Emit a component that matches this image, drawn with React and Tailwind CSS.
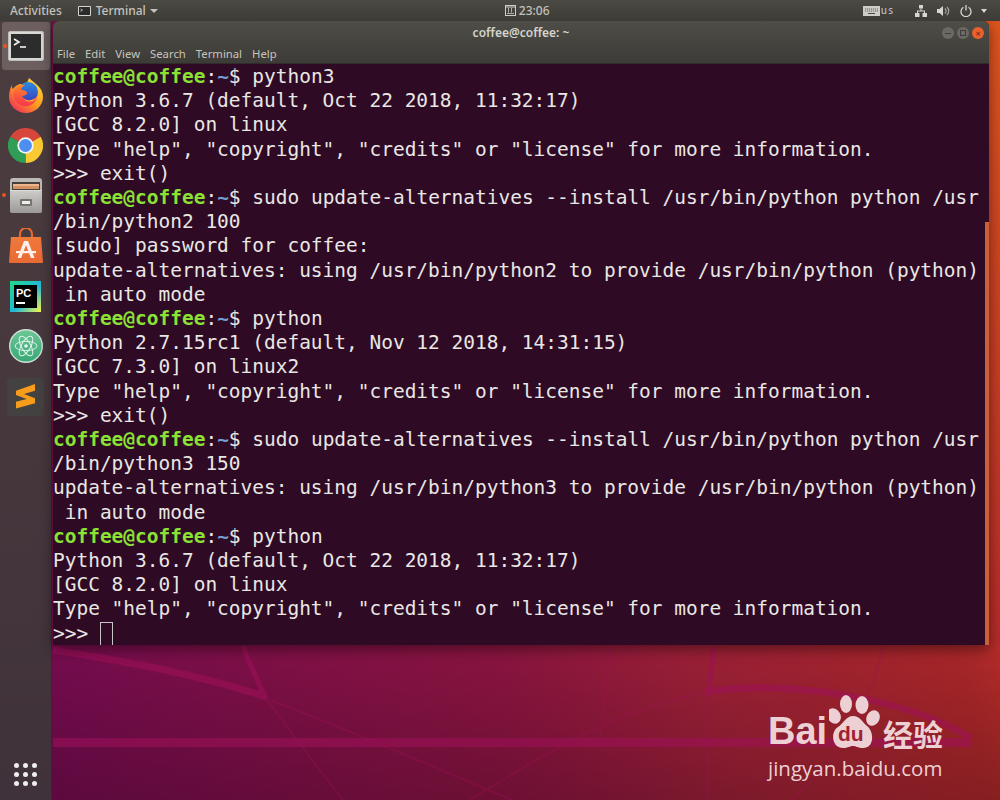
import React from "react";

const P = ({ children }) => (
  <div>
    <span className="font-bold text-[#8ae234]">coffee@coffee</span>
    <span>:</span>
    <span className="font-bold text-[#729fcf]">~</span>
    <span>$ {children}</span>
  </div>
);

const L = ({ children }) => <div>{children}</div>;

const TerminalIcon = () => (
  <svg width="36" height="30" viewBox="0 0 36 30">
    <rect x="0.5" y="0.5" width="35" height="29" rx="1.5" fill="#d8d8d4" stroke="#bdbdb8" />
    <rect x="3" y="3" width="30" height="24" fill="#2c2c2c" />
    <path d="M6 8l5 3-5 3" fill="none" stroke="#f2f2f2" strokeWidth="1.6" />
    <path d="M12 16h6" stroke="#f2f2f2" strokeWidth="1.6" />
  </svg>
);

const FirefoxIcon = () => (
  <svg width="36" height="36" viewBox="0 0 36 36">
    <defs>
      <linearGradient id="ffa" x1="0.85" y1="0.1" x2="0.15" y2="0.95">
        <stop offset="0" stopColor="#ffd83a" />
        <stop offset="0.5" stopColor="#ff9a1f" />
        <stop offset="1" stopColor="#f0305a" />
      </linearGradient>
      <linearGradient id="ffb" x1="0.5" y1="0" x2="0.5" y2="1">
        <stop offset="0" stopColor="#2a8ae0" />
        <stop offset="1" stopColor="#3a3fb8" />
      </linearGradient>
      <linearGradient id="ffc" x1="0.5" y1="0" x2="0.3" y2="1">
        <stop offset="0" stopColor="#ff8a25" />
        <stop offset="1" stopColor="#f5334f" />
      </linearGradient>
    </defs>
    <path d="M21 1c3 3 8 6 11 10 2 3 3 6 3 9 0 9-8 16-17 16S1 29 1 20c0-5 1-8 3-12 0 2 0 3 1 4 2-3 5-5 9-5 3 0 5 0 7-6z" fill="url(#ffa)" />
    <circle cx="20" cy="15" r="10" fill="url(#ffb)" />
    <path d="M6 14c2-5 6-7 11-6-2 1-4 3-4 5 3 0 6 1 6 3s-3 3-5 3c2 3 5 5 9 4 3-1 5-2 6-4 0 6-6 11-13 10C9 28 4 21 6 14z" fill="url(#ffc)" />
    <path d="M16 22c3 2 8 2 12-1-2 4-8 5-12 1z" fill="#ffb43a" />
  </svg>
);

const ChromeIcon = () => (
  <svg width="35" height="35" viewBox="0 0 36 36">
    <path d="M18 18L2.4 9A18 18 0 0 1 33.6 9z" fill="#d8453a" />
    <path d="M18 18L33.6 9A18 18 0 0 1 18 36z" fill="#fbc934" />
    <path d="M18 18L18 36A18 18 0 0 1 2.4 9z" fill="#2f9e56" />
    <circle cx="18" cy="18" r="8.4" fill="#f4f4f4" />
    <circle cx="18" cy="18" r="6.6" fill="#4d8ff0" />
  </svg>
);

const FilesIcon = () => (
  <svg width="34" height="36" viewBox="0 0 34 36">
    <defs>
      <linearGradient id="cab" x1="0" y1="0" x2="0" y2="1">
        <stop offset="0" stopColor="#cfcdc9" />
        <stop offset="1" stopColor="#9c9a96" />
      </linearGradient>
    </defs>
    <rect x="1" y="0" width="32" height="35" rx="3" fill="#bcbab6" />
    <rect x="3" y="4" width="28" height="9" fill="#45403a" />
    <rect x="4" y="6" width="26" height="2" fill="#eeb58a" />
    <rect x="4" y="8" width="26" height="3" fill="#d49166" />
    <rect x="1" y="12" width="32" height="23" rx="2.5" fill="url(#cab)" />
    <rect x="1" y="12" width="32" height="1" fill="#dedcd8" />
    <rect x="11" y="21" width="12" height="7" rx="1" fill="#75736f" />
    <rect x="13" y="23" width="8" height="3" fill="#eeedea" />
  </svg>
);

const StoreIcon = () => (
  <svg width="34" height="35" viewBox="0 0 34 35">
    <defs>
      <linearGradient id="bag" x1="0" y1="0" x2="0" y2="1">
        <stop offset="0" stopColor="#f0793c" />
        <stop offset="1" stopColor="#e86a33" />
      </linearGradient>
    </defs>
    <path d="M11 9V6a6 6 0 0 1 12 0v3" fill="none" stroke="#e8692f" strokeWidth="2.2" />
    <path d="M2 9h30l2 25a1 1 0 0 1-1 1H1a1 1 0 0 1-1-1z" fill="url(#bag)" />
    <path d="M15 13h4l6.5 17h-3.6l-4.9-13-4.9 13H8.500z" fill="#fdf0e8" />
    <rect x="7" y="23" width="20" height="2.2" fill="#fdf0e8" />
  </svg>
);

const PyCharmIcon = () => (
  <svg width="31" height="31" viewBox="0 0 31 31">
    <defs>
      <linearGradient id="pca" x1="0" y1="0" x2="1" y2="1">
        <stop offset="0" stopColor="#21d789" />
        <stop offset="0.55" stopColor="#21b8d8" />
        <stop offset="1" stopColor="#fcf84a" />
      </linearGradient>
    </defs>
    <rect width="31" height="31" fill="url(#pca)" />
    <rect x="4" y="4" width="23" height="23" fill="#000" />
    <text x="6" y="16" fill="#fff" fontSize="11" fontWeight="700" fontFamily="Liberation Sans, sans-serif">PC</text>
    <rect x="6" y="21" width="9" height="2" fill="#fff" />
  </svg>
);

const AtomIcon = () => (
  <svg width="34" height="34" viewBox="0 0 34 34">
    <defs>
      <linearGradient id="atm" x1="0" y1="0" x2="0" y2="1">
        <stop offset="0" stopColor="#6cc795" />
        <stop offset="1" stopColor="#37a877" />
      </linearGradient>
    </defs>
    <circle cx="17" cy="17" r="16.3" fill="url(#atm)" stroke="#cfded6" strokeWidth="1.4" />
    <g fill="none" stroke="#e8f4ee" strokeWidth="0.9">
      <ellipse cx="17" cy="17" rx="11" ry="4.6" transform="rotate(60 17 17)" />
      <ellipse cx="17" cy="17" rx="11" ry="4.6" transform="rotate(-60 17 17)" />
      <ellipse cx="17" cy="17" rx="11" ry="4.6" />
    </g>
    <circle cx="17" cy="17" r="1.8" fill="#e8f4ee" />
  </svg>
);

const SublimeIcon = () => (
  <div className="flex h-[38px] w-[37px] items-center justify-center rounded-[4px] bg-[#444240]">
    <svg width="19" height="25" viewBox="0 0 19 25">
      <path d="M0 6.700L19 0v6.700L8 10l11 4.300v5L0 24.500v-6.800L10.700 15 0 11z" fill="#f89c1c" />
    </svg>
  </div>
);

const dockItems = [
  { icon: <FirefoxIcon />, h: "h-[50px]" },
  { icon: <ChromeIcon />, h: "h-[51px]" },
  { icon: <FilesIcon />, h: "h-[49px]", dot: true },
  { icon: <StoreIcon />, h: "h-[51px]" },
  { icon: <PyCharmIcon />, h: "h-[50px]" },
  { icon: <AtomIcon />, h: "h-[50px]" },
  { icon: <SublimeIcon />, h: "h-[51px]" },
];

const Dock = () => (
  <div className="flex w-[52px] shrink-0 flex-col items-center border-r border-[#352a30] bg-gradient-to-b from-[#4c3d3f] to-[#40323a]">
    <div className="relative mt-px flex h-[48px] w-[48px] items-center justify-center rounded-[3px] bg-[#6d5e60]">
      <span className="absolute left-[1px] top-[22px] h-[4px] w-[4px] rounded-full bg-[#e95420]" />
      <TerminalIcon />
    </div>
    {dockItems.map((item, i) => (
      <div key={i} className={`relative flex w-full items-center justify-center ${item.h}`}>
        {item.dot && <span className="absolute left-[2px] top-[22px] h-[4px] w-[4px] rounded-full bg-[#e95420]" />}
        {item.icon}
      </div>
    ))}
    <div className="mb-[14px] mt-auto grid grid-cols-3 gap-[4px]">
      {[...Array(9)].map((_, i) => (
        <span key={i} className="h-[5px] w-[5px] rounded-full bg-[#eeeeee]" />
      ))}
    </div>
  </div>
);

const TopBar = () => (
  <div className="relative z-10 flex h-[21px] items-center bg-gradient-to-b from-[#4b4a44] to-[#3c3b36] pl-[10px] text-[12px] font-medium text-[#c4c2bc]">
    <span>Activities</span>
    <svg className="ml-[16px]" width="13" height="10" viewBox="0 0 13 10">
      <rect width="13" height="10" rx="1" fill="#d5d5d0" />
      <rect x="1" y="1" width="11" height="8" fill="#2c2c2c" />
      <path d="M2.500 3l2 1.200-2 1.200" fill="none" stroke="#eee" strokeWidth="0.7" />
    </svg>
    <span className="ml-[5px]">Terminal</span>
    <span className="ml-[4px] h-0 w-0 border-x-[4px] border-t-[4px] border-x-transparent border-t-[#c4c2bc]" />
    <div className="ml-[347px] flex items-center gap-[3px]">
      <svg width="11" height="11" viewBox="0 0 11 11" fill="none" stroke="#cfcdc7">
        <rect x="0.500" y="0.500" width="10" height="10" />
        <path d="M0 2h11" />
        <path d="M3.500 3v4.500M6.500 3v4.500M2 8.500h7" strokeWidth="0.8" />
      </svg>
      <span>23:06</span>
    </div>
    <div className="ml-auto flex items-center pr-[13px]">
      <svg width="17" height="10" viewBox="0 0 17 10">
        <rect width="17" height="10" fill="#cfcdc7" />
        <path d="M2 3h13M2 5h13" stroke="#4a4843" strokeWidth="0.8" strokeDasharray="1.2 0.8" />
        <path d="M5 7.500h7" stroke="#4a4843" />
      </svg>
      <span className="ml-px text-[10px] tracking-[1px] text-[#b8b8c8]">us</span>
      <svg className="ml-[21px]" width="12" height="12" viewBox="0 0 12 12" fill="#d8d6d0">
        <rect x="4" y="0" width="4" height="3.500" />
        <rect x="0" y="8" width="4.500" height="4" />
        <rect x="7.500" y="8" width="4.500" height="4" />
        <path d="M5.500 3.500h1V5.500h3.500V8h-1V6.500H3V8H2V5.500h3.500z" />
      </svg>
      <svg className="ml-[10px]" width="13" height="12" viewBox="0 0 13 12">
        <path d="M0 4h2.500L6 1v10L2.500 8H0z" fill="#d8d6d0" />
        <path d="M8 3.500a3.500 3.500 0 0 1 0 5M10 2a5.500 5.500 0 0 1 0 8" fill="none" stroke="#a8a6a0" strokeWidth="1.2" />
      </svg>
      <svg className="ml-[10px]" width="12" height="12" viewBox="0 0 12 12" fill="none" stroke="#d8d6d0" strokeWidth="1.3">
        <path d="M3.400 2.300a5 5 0 1 0 5.200 0" />
        <path d="M6 0v5.500" />
      </svg>
      <span className="ml-[9px] h-0 w-0 border-x-[3.5px] border-t-[4px] border-x-transparent border-t-[#d8d6d0]" />
    </div>
  </div>
);

const TerminalWindow = () => (
  <div className="relative ml-px mr-[11px] h-[624px] flex-1 overflow-hidden rounded-t-[6px] bg-[#2e0a24] shadow-[0_4px_14px_rgba(0,0,0,0.45)]">
    <div className="relative h-[43px] border-b border-[#2f2c2a] bg-gradient-to-b from-[#4e4d47] to-[#3c3b37] font-['Noto_Sans',sans-serif] text-[11.3px]">
      <div className="pt-[4px] text-center text-[12px] font-semibold leading-[16px] text-[#d5d3cd]">coffee@coffee: ~</div>
      <div className="absolute right-[5px] top-[6px] flex gap-[3px]">
        <div className="flex h-[12px] w-[12px] items-center justify-center rounded-full bg-[#6a6964]">
          <span className="h-px w-[6px] bg-[#3e3d39]" />
        </div>
        <div className="flex h-[12px] w-[12px] items-center justify-center rounded-full bg-[#6a6964]">
          <span className="h-[6px] w-[6px] border border-[#3e3d39]" />
        </div>
        <div className="flex h-[12px] w-[12px] items-center justify-center rounded-full bg-[#e9602c] text-[9px] leading-none text-[#5a2a18]">×</div>
      </div>
      <div className="mt-[5px] flex gap-[10px] pl-[4px] leading-[16px] text-[#c6c4be]">
        <span>File</span>
        <span>Edit</span>
        <span>View</span>
        <span>Search</span>
        <span>Terminal</span>
        <span>Help</span>
      </div>
    </div>
    <div className="whitespace-pre pt-px font-['DejaVu_Sans_Mono',monospace] text-[19.48px] leading-[24.2px] text-[#e9e7e4]">
      <P>python3</P>
      <L>Python 3.6.7 (default, Oct 22 2018, 11:32:17)</L>
      <L>[GCC 8.2.0] on linux</L>
      <L>Type "help", "copyright", "credits" or "license" for more information.</L>
      <L>&gt;&gt;&gt; exit()</L>
      <P>sudo update-alternatives --install /usr/bin/python python /usr</P>
      <L>/bin/python2 100</L>
      <L>[sudo] password for coffee:</L>
      <L>update-alternatives: using /usr/bin/python2 to provide /usr/bin/python (python)</L>
      <L> in auto mode</L>
      <P>python</P>
      <L>Python 2.7.15rc1 (default, Nov 12 2018, 14:31:15)</L>
      <L>[GCC 7.3.0] on linux2</L>
      <L>Type "help", "copyright", "credits" or "license" for more information.</L>
      <L>&gt;&gt;&gt; exit()</L>
      <P>sudo update-alternatives --install /usr/bin/python python /usr</P>
      <L>/bin/python3 150</L>
      <L>update-alternatives: using /usr/bin/python3 to provide /usr/bin/python (python)</L>
      <L> in auto mode</L>
      <P>python</P>
      <L>Python 3.6.7 (default, Oct 22 2018, 11:32:17)</L>
      <L>[GCC 8.2.0] on linux</L>
      <L>Type "help", "copyright", "credits" or "license" for more information.</L>
      <div className="flex items-center">
        <span>&gt;&gt;&gt; </span>
        <span className="h-[25px] w-[13px] border border-[#c9c5c6]" />
      </div>
    </div>
    <div className="absolute bottom-0 right-0 h-[423px] w-[4px] bg-[#c8603a]" />
  </div>
);

const Wallpaper = () => (
  <svg className="absolute inset-0" width="1000" height="800" viewBox="0 0 1000 800" fill="none">
    <g stroke="#a0105a" opacity="0.55">
      <path d="M53 650C130 662 200 675 266 697" strokeWidth="7" />
      <path d="M243 646C250 665 258 682 266 699" strokeWidth="5" />
      <path d="M53 742.500H971" strokeWidth="9" />
      <path d="M714 646C712 665 710 680 708 696" strokeWidth="5" />
      <path d="M705 692C780 680 900 695 971 738" strokeWidth="7" />
    </g>
    <g stroke="#a0105a" strokeWidth="2" opacity="0.28">
      <path d="M266 699C290 730 315 765 343 800" />
      <path d="M270 700C350 730 440 770 512 800" />
      <path d="M705 693C640 705 590 725 470 800" />
      <path d="M609 646C607 680 603 710 600 740" />
      <path d="M708 696V800" />
      <path d="M883 646C870 710 830 770 790 800" />
    </g>
  </svg>
);

const Watermark = () => (
  <div className="absolute left-[768px] top-[694px] w-[180px] text-[#edd0d3]">
    <div className="relative h-[60px]">
      <span className="absolute left-0 top-[15px] font-['Liberation_Sans',sans-serif] text-[38px] font-bold leading-[44px]">Bai</span>
      <svg className="absolute left-[61px] top-0" width="52" height="56" viewBox="0 0 52 56" fill="#edd0d3">
        <ellipse cx="17" cy="10" rx="6" ry="9" />
        <ellipse cx="33" cy="11" rx="6.5" ry="9" />
        <ellipse cx="5" cy="22" rx="6.5" ry="8" transform="rotate(-30 5 22)" />
        <ellipse cx="44" cy="24" rx="6.5" ry="8" transform="rotate(25 44 24)" />
        <path d="M24 22c7 0 9 6 14 10 7 5 8 22-4 22-5 0-7-2-10-2s-5 2-10 2C3 54 1 38 9 33c6-4 8-11 15-11z" />
      </svg>
      <span className="absolute left-[70px] top-[28px] font-['Liberation_Sans',sans-serif] text-[21px] font-bold leading-[24px] text-[#a02134]">du</span>
      <span className="absolute left-[115px] top-[21px] font-['Noto_Sans_CJK_SC',sans-serif] text-[30px] font-bold leading-[36px]">经验</span>
    </div>
    <div className="mt-[1px] whitespace-nowrap font-['Open_Sans',sans-serif] text-[20.5px] leading-[26px]">jingyan.baidu.com</div>
  </div>
);

export default function App() {
  return (
    <div className="relative flex h-[800px] w-[1000px] flex-col overflow-hidden bg-[linear-gradient(180deg,rgba(0,0,0,0)_80%,rgba(0,0,0,0.2)_100%),linear-gradient(75deg,#700a4e_0%,#760c4e_8%,#8a1440_44%,#9c2036_61%,#a82629_82%,#b52c28_86%,#d9501e_98%,#e0561c_100%)] font-['Noto_Sans',sans-serif]">
      <Wallpaper />
      <Watermark />
      <TopBar />
      <div className="relative flex flex-1">
        <Dock />
        <div className="flex flex-1 items-start">
          <TerminalWindow />
        </div>
      </div>
    </div>
  );
}
